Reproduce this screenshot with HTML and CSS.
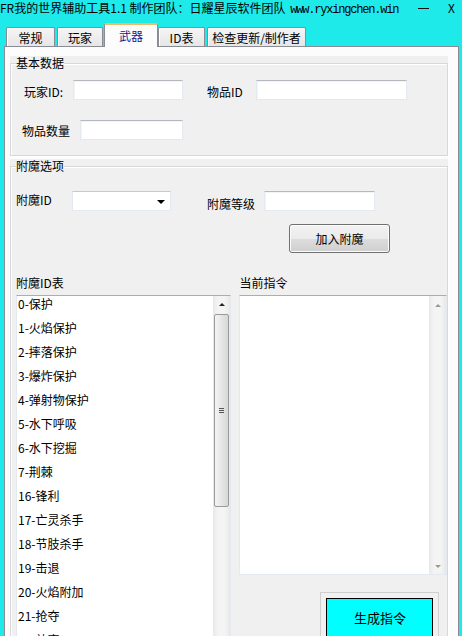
FILE: index.html
```html
<!DOCTYPE html>
<html lang="zh-CN">
<head>
  <meta charset="UTF-8">
  <title>FR我的世界辅助工具1.1</title>
  <link rel="stylesheet" href="styles.css">
</head>
<body>
  <!-- Window title -->
  <div class="titlebar">
    <span class="title">FR我的世界辅助工具1.1 制作团队：日耀星辰软件团队 <span class="url">www.ryxingchen.win</span></span>
    <span class="ctrl min" title="最小化"><span class="min-bar"></span></span>
    <span class="ctrl close">X</span>
  </div>

  <!-- Tab strip -->
  <div class="tabs">
    <div class="tab tab-general">常规</div>
    <div class="tab tab-player">玩家</div>
    <div class="tab tab-weapon active">武器</div>
    <div class="tab tab-ids">ID表</div>
    <div class="tab tab-update">检查更新/制作者</div>
  </div>

  <div class="panel">
    <!-- Basic data -->
    <div class="group">
      <div class="legend">基本数据</div>
      <div class="box basic-box">
        <div class="row">
          <label class="lbl lbl-player">玩家ID:</label>
          <input type="text" class="field f-player">
          <label class="lbl lbl-item">物品ID</label>
          <input type="text" class="field f-item">
        </div>
        <div class="row row-count">
          <label class="lbl lbl-count">物品数量</label>
          <input type="text" class="field f-count">
        </div>
      </div>
    </div>

    <!-- Enchant options -->
    <div class="group group-enchant">
      <div class="legend">附魔选项</div>
      <div class="box enchant-box">
        <div class="row row-enchant">
          <label class="lbl lbl-ench">附魔ID</label>
          <div class="combo"><span class="combo-arrow"></span></div>
          <label class="lbl lbl-level">附魔等级</label>
          <input type="text" class="field f-level">
        </div>
        <div class="row row-add">
          <button class="btn-add">加入附魔</button>
        </div>

        <div class="lists">
          <div class="col col-left">
            <div class="col-title">附魔ID表</div>
            <div class="listbox">
              <ul class="items">
                <li>0-保护</li>
                <li>1-火焰保护</li>
                <li>2-摔落保护</li>
                <li>3-爆炸保护</li>
                <li>4-弹射物保护</li>
                <li>5-水下呼吸</li>
                <li>6-水下挖掘</li>
                <li>7-荆棘</li>
                <li>16-锋利</li>
                <li>17-亡灵杀手</li>
                <li>18-节肢杀手</li>
                <li>19-击退</li>
                <li>20-火焰附加</li>
                <li>21-抢夺</li>
                <li>32-效率</li>
              </ul>
              <div class="vscroll">
                <span class="arrow up"></span>
                <div class="thumb"><span class="grip"></span></div>
              </div>
            </div>
          </div>

          <div class="col col-right">
            <div class="col-title">当前指令</div>
            <div class="memo">
              <div class="memo-text"></div>
              <div class="vscroll disabled">
                <span class="arrow up"></span>
                <span class="arrow down"></span>
              </div>
            </div>
            <button class="btn-gen">生成指令</button>
          </div>
        </div>
      </div>
    </div>
  </div>
</body>
</html>
```

FILE: styles.css
```css
* {
  box-sizing: border-box;
}
body {
  margin: 0;
  width: 462px;
  height: 636px;
  overflow: hidden;
  background-color: #1eeaea;
  font-family: "Noto Sans CJK SC", "Noto Sans", sans-serif;
  font-size: 12px;
  color: #000;
}

/* Title bar */
.titlebar {
  display: flex;
  height: 23px;
  line-height: 16px;
  padding-right: 8px;
}
.title {
  flex: 1;
  min-width: 0;
  overflow: hidden;
  white-space: nowrap;
}
/* 12px mono squeezed to 6px per char, like the original bitmap font */
.url {
  font-family: "Liberation Mono", monospace;
  font-size: 12px;
  letter-spacing: -1.2px;
  margin-left: 2px;
}
.ctrl {
  flex: none;
  width: 12px;
  text-align: center;
}
.ctrl.min {
  margin-right: 18px;
  padding-top: 8px;
}
.min-bar {
  display: block;
  width: 11px;
  height: 1px;
  background: #111;
}
.ctrl.close {
  width: 6px;
}

/* Tabs */
.tabs {
  display: flex;
  align-items: flex-end;
  height: 23px;
  padding-left: 6px;
}
.tab {
  height: 19px;
  margin-right: 2px;
  border: 1px solid #898c95;
  border-bottom: none;
  border-radius: 2px 2px 0 0;
  background: linear-gradient(#f5f5f5, #e6e6e6);
  box-shadow: inset 1px 1px #fff;
  text-align: center;
  line-height: 18px;
  padding-top: 1px;
}
.tab-general { width: 49px; }
.tab-player  { width: 46px; }
.tab-ids     { width: 47px; }
.tab-update  { width: 99px; }
.tab.active {
  position: relative;
  z-index: 1;
  width: 54px;
  height: 24px;
  margin: 0 0 -1px -1px;
  background: #fcfcfc;
  border-top: 2px solid #f2bb63;
  color: #16168a;
  box-shadow: none;
  line-height: 20px;
}

/* Tab page */
.panel {
  margin-left: 4px;
  width: 455px;
  height: 700px;
  border: 1px solid #898c95;
  background: #fcfcfc;
  padding: 9px 10px 0 5px;
}

/* Group boxes */
.group {
  background: #f0f0f0;
}
.group-enchant {
  margin-top: 3px;
}
.legend {
  display: table;
  position: relative;
  z-index: 1;
  margin-left: 6px;
  background: #f0f0f0;
  line-height: 14px;
}
.box {
  margin-top: -7px;
  border: 1px solid #d5d9dc;
  box-shadow: inset 1px 1px #fff, 1px 1px #fff;
}
.basic-box {
  padding: 16px 0 15px 0;
}
.enchant-box {
  padding: 24px 0 0 0;
  height: 520px;
  border-bottom: none;
}

.row {
  display: flex;
  align-items: center;
  height: 20px;
}
.row-count {
  margin-top: 20px;
}
.lbl {
  line-height: 14px;
  white-space: nowrap;
}
.lbl-player { width: 62px; padding-left: 13px; margin-top: 4px; }
.lbl-item   { width: 49px; margin-left: 24px; margin-top: 3px; }
.lbl-count  { width: 69px; padding-left: 11px; margin-top: 2px; }
.lbl-ench   { width: 61px; padding-left: 5px; margin-top: -3px; }
.lbl-level  { width: 57px; margin-left: 36px; margin-top: 6px; }

.field {
  height: 20px;
  margin: 0;
  border: 1px solid #e3e9ef;
  border-top-color: #b5b9bf;
  background: #fff;
  box-shadow: inset 1px 1px #f4f4f4;
  font: inherit;
}
.f-player { width: 110px; }
.f-item   { width: 151px; }
.f-count  { width: 103px; }
.f-level  { width: 111px; }

.combo {
  width: 99px;
  height: 20px;
  border: 1px solid #e3e9ef;
  border-top-color: #c5c9cf;
  background: #fff;
  display: flex;
  justify-content: flex-end;
  align-items: center;
  padding-right: 5px;
}
.combo-arrow {
  width: 0;
  height: 0;
  border-left: 4px solid transparent;
  border-right: 4px solid transparent;
  border-top: 4px solid #000;
  margin-top: 1px;
}

.row-add {
  margin-top: 13px;
  height: 29px;
}
.btn-add {
  margin-left: 278px;
  width: 101px;
  height: 29px;
  border: 1px solid #707070;
  border-radius: 3px;
  background: linear-gradient(#f2f2f2 0%, #ebebeb 50%, #dddddd 51%, #cfcfcf 100%);
  box-shadow: inset 0 0 0 1px #fcfcfc;
  font: inherit;
  color: #000;
  padding: 0;
}

/* Lists */
.lists {
  display: flex;
  margin-top: 23px;
  padding-left: 5px;
}
.col-title {
  line-height: 14px;
  height: 19px;
}
.col-left {
  width: 216px;
}
.col-right {
  width: 208px;
  margin-left: 8px;
}
.listbox {
  display: flex;
  height: 360px;
  border: 1px solid #e3e9ef;
  border-top-color: #abadb3;
  background: #fff;
}
.items {
  flex: 1;
  margin: 0;
  padding: 0 0 0 1px;
  list-style: none;
}
.items li {
  height: 24px;
  line-height: 14px;
  padding-top: 1px;
}

.vscroll {
  width: 17px;
  background: linear-gradient(90deg, #e8e8e8, #f4f4f4 30%, #f4f4f4 70%, #e8e8e8);
  display: flex;
  flex-direction: column;
  align-items: center;
  padding-top: 7px;
}
.arrow {
  width: 0;
  height: 0;
  border-left: 3px solid transparent;
  border-right: 3px solid transparent;
}
.arrow.up {
  border-bottom: 3px solid #222;
}
.arrow.down {
  border-top: 3px solid #999;
  margin-top: auto;
  margin-bottom: 6px;
}
.vscroll.disabled .arrow.up {
  border-bottom-color: #999;
}
.thumb {
  margin-top: 8px;
  width: 15px;
  height: 193px;
  border: 1px solid #9a9a9a;
  border-radius: 2px;
  background: linear-gradient(90deg, #f4f4f4, #e6e6e6 50%, #d6d6d6);
  display: flex;
  align-items: center;
  justify-content: center;
}
.grip {
  width: 5px;
  height: 5px;
  border-top: 1px solid #555;
  border-bottom: 1px solid #555;
}
.grip::after {
  content: "";
  display: block;
  margin-top: 1px;
  height: 1px;
  background: #555;
}

.memo {
  display: flex;
  height: 280px;
  border: 1px solid #e3e9ef;
  border-top-color: #abadb3;
  background: #fff;
}
.memo-text {
  flex: 1;
}
.memo .vscroll {
  padding-top: 8px;
}

.btn-gen {
  display: block;
  margin: 23px 0 0 87px;
  width: 107px;
  height: 40px;
  border: 1px solid #000;
  background: #00ffff;
  outline: 1px solid #cfcfcf;
  outline-offset: 5px;
  font: inherit;
  font-size: 13px;
  color: #000;
  padding: 0 0 2px 0;
}
```
